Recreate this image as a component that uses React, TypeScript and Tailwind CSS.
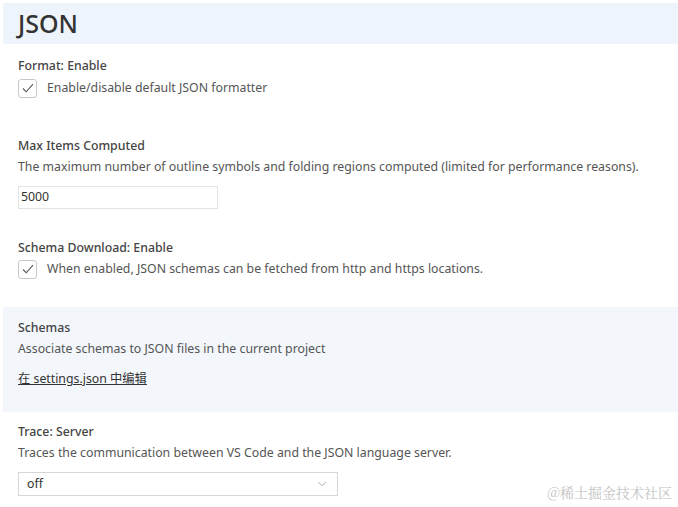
import { ChevronDown } from 'lucide-react';

function Check() {
  return (
    <div className="flex h-[19px] w-[19px] shrink-0 items-center justify-center rounded-[3px] border border-[#c8c8c8] bg-white">
      <svg width="14" height="14" viewBox="0 0 14 14" fill="none">
        <path d="M2 7.5 L5.2 10.8 L12 3.2" stroke="#555" strokeWidth="1.1" />
      </svg>
    </div>
  );
}

function Title({ children }: { children: React.ReactNode }) {
  return <div className="h-[20px] leading-[20px] font-medium text-[#444]">{children}</div>;
}

function Desc({ children }: { children: React.ReactNode }) {
  return <div className="h-[22px] leading-[22px] text-[#555]">{children}</div>;
}

export default function App() {
  return (
    <div
      className="relative h-[507px] w-[678px] overflow-hidden bg-white pt-[3px] pl-[3px] text-[12.3px]"
      style={{ fontFamily: '"Noto Sans", "Noto Sans CJK SC", sans-serif' }}
    >
      <div className="flex h-[41px] items-center bg-[#eef4fc] pl-[15px]">
        <h1 className="text-[25px] font-medium leading-none text-[#333]">JSON</h1>
      </div>

      <div className="pl-[15px]">
        <div className="pt-[12px]">
          <Title>Format: Enable</Title>
          <div className="mt-[1px] flex h-[22px] items-center gap-[10px]">
            <Check />
            <span className="text-[#555]">Enable/disable default JSON formatter</span>
          </div>
        </div>

        <div className="pt-[37px]">
          <Title>Max Items Computed</Title>
          <Desc>The maximum number of outline symbols and folding regions computed (limited for performance reasons).</Desc>
          <div className="mt-[8px] flex h-[23px] w-[200px] items-center border border-[#e3e3e3] bg-white pl-[2px] text-[#333]">
            5000
          </div>
        </div>

        <div className="pt-[29px]">
          <Title>Schema Download: Enable</Title>
          <div className="flex h-[22px] items-center gap-[10px]">
            <Check />
            <span className="text-[#555]">When enabled, JSON schemas can be fetched from http and https locations.</span>
          </div>
        </div>
      </div>

      <div className="mt-[27px] h-[105px] bg-[#f3f7fc] pl-[15px] pt-[11px]">
        <Title>Schemas</Title>
        <Desc>Associate schemas to JSON files in the current project</Desc>
        <div className="mt-[8px] h-[22px] leading-[22px] text-[#333] underline">在 settings.json 中编辑</div>
      </div>

      <div className="pl-[15px] pt-[10px]">
        <Title>Trace: Server</Title>
        <Desc>Traces the communication between VS Code and the JSON language server.</Desc>
        <div className="mt-[8px] flex h-[24px] w-[320px] items-center justify-between border border-[#d6d6d6] bg-white pl-[8px] pr-[8px] text-[#333]">
          <span>off</span>
          <ChevronDown size={14} strokeWidth={1.2} className="text-[#888]" />
        </div>
      </div>

      <div
        className="absolute right-[6px] bottom-[4px] text-[14px] text-[#c4c4c4]"
        style={{ fontFamily: '"Noto Serif CJK SC", "Noto Sans CJK SC", serif' }}
      >
        @稀土掘金技术社区
      </div>
    </div>
  );
}
